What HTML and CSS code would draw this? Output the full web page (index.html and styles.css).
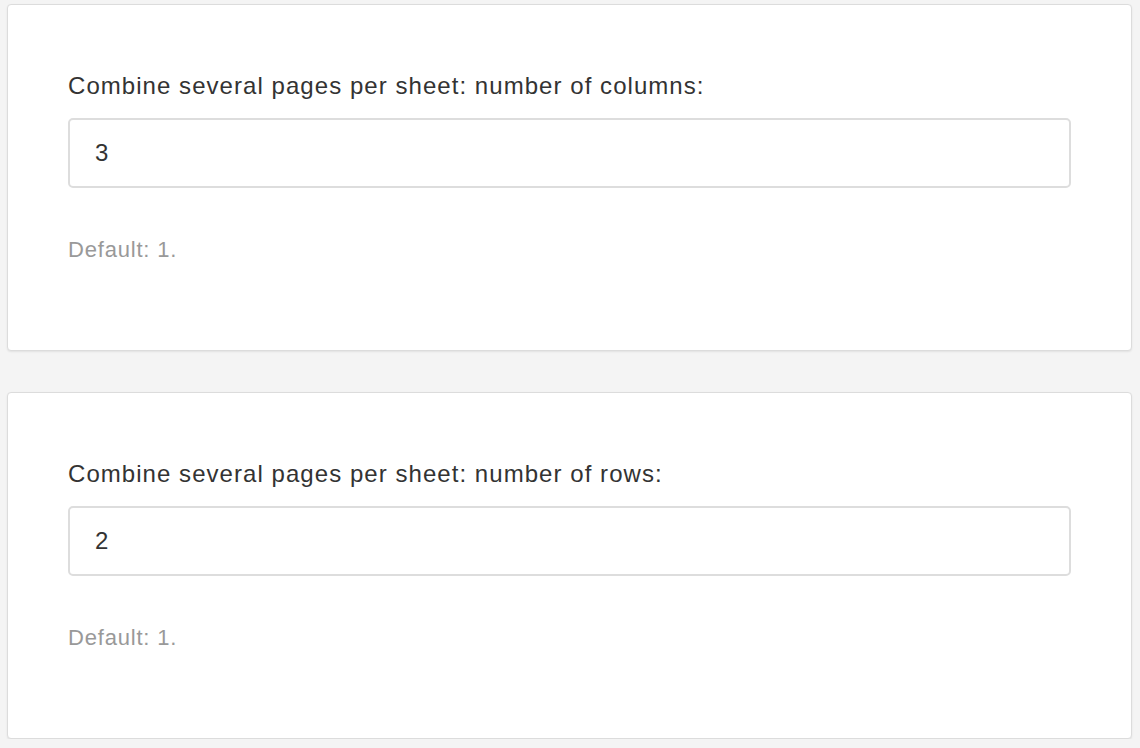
FILE: index.html
```html
<!DOCTYPE html>
<html lang="en">
<head>
<meta charset="utf-8">
<title>Options</title>
<link rel="stylesheet" href="styles.css">
</head>
<body>
<div class="page">
  <section class="card">
    <label class="label" for="cols">Combine several pages per sheet: number of columns:</label>
    <input class="field" id="cols" type="text" value="3">
    <p class="hint">Default: 1.</p>
  </section>
  <section class="card">
    <label class="label" for="rows">Combine several pages per sheet: number of rows:</label>
    <input class="field" id="rows" type="text" value="2">
    <p class="hint">Default: 1.</p>
  </section>
</div>
</body>
</html>
```

FILE: styles.css
```css
html, body {
  margin: 0;
  padding: 0;
  background: #f4f4f4;
}
body {
  font-family: "Liberation Sans", Arial, sans-serif;
  color: #333;
}
.page {
  display: flex;
  flex-direction: column;
  gap: 41px;
  padding: 4px 8px 0 7px;
}
.card {
  box-sizing: border-box;
  height: 347px;
  background: #fff;
  border: 1px solid #dcdcdc;
  border-radius: 4px;
  box-shadow: 0 1px 2px rgba(0,0,0,0.08);
  padding: 67px 60px 0 60px;
  display: flex;
  flex-direction: column;
}
.label {
  display: block;
  font-size: 24px;
  line-height: 28px;
  letter-spacing: 1.05px;
  color: #333;
}
.field {
  box-sizing: border-box;
  margin-top: 18px;
  width: 100%;
  height: 70px;
  border: 2px solid #ddd;
  border-radius: 5px;
  padding: 0 25px;
  font-family: "Liberation Sans", Arial, sans-serif;
  font-size: 24px;
  color: #333;
  background: #fff;
  outline: none;
}
.hint {
  margin: 50px 0 0;
  font-size: 22px;
  line-height: 24px;
  letter-spacing: 0.8px;
  color: #999;
}
```
